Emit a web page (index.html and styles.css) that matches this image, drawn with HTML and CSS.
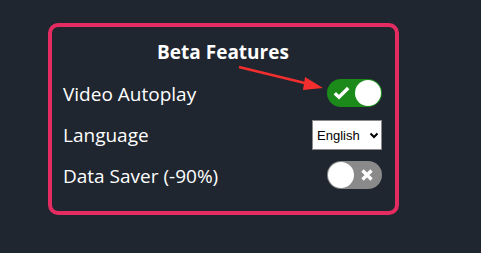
FILE: index.html
```html
<!DOCTYPE html>
<html>
<head>
<meta charset="utf-8">
<link rel="stylesheet" href="styles.css">
</head>
<body>
<div class="card">
  <div class="title">Beta Features</div>
  <div class="row first">
    <span class="label">Video Autoplay</span>
    <span class="toggle on">
      <svg class="icon check" width="17" height="14" viewBox="0 0 17 14"><path d="M1.8 7.2 L6 11.2 L15.2 2" fill="none" stroke="#fff" stroke-width="3.4"/></svg>
      <span class="knob"></span>
    </span>
  </div>
  <div class="row">
    <span class="label">Language</span>
    <span class="select-wrap">
      <select class="select"><option>English</option></select>
      <svg class="chev" width="10" height="7" viewBox="0 0 10 7"><path d="M1.5 1.5 L5 5 L8.5 1.5" fill="none" stroke="#000" stroke-width="2"/></svg>
    </span>
  </div>
  <div class="row">
    <span class="label">Data Saver (-90%)</span>
    <span class="toggle off">
      <span class="knob"></span>
      <svg class="icon cross" width="14" height="14" viewBox="0 0 14 14"><path d="M2.5 2.5 L11.5 11.5 M11.5 2.5 L2.5 11.5" fill="none" stroke="#fff" stroke-width="3.4"/></svg>
    </span>
  </div>
</div>
<svg class="arrow" width="100" height="30" viewBox="0 0 100 30">
  <line x1="2" y1="2" x2="76" y2="20" stroke="#f22e2e" stroke-width="2.5"/>
  <polygon points="86,23 68,12 66,25" fill="#f22e2e"/>
</svg>
</body>
</html>
```
FILE: styles.css
```css
html, body {
  margin: 0;
  padding: 0;
  background: #1f262f;
  width: 481px;
  height: 253px;
  overflow: hidden;
}
body {
  position: relative;
  font-family: "Open Sans", "Noto Sans", sans-serif;
  color: #fff;
}
.card {
  box-sizing: border-box;
  margin: 23px 0 0 48px;
  width: 351px;
  height: 192px;
  border: 4px solid #e42c62;
  border-radius: 10px;
  padding: 13px 13px 0 11px;
  display: flex;
  flex-direction: column;
}
.title {
  font-weight: 700;
  font-size: 19px;
  line-height: 24px;
  text-align: center;
  padding-left: 1px;
}
.row {
  display: flex;
  align-items: center;
  justify-content: space-between;
  height: 41px;
  font-size: 19px;
}
.row.first {
  margin-top: 9px;
}
.label {
  line-height: 24px;
}
.toggle {
  position: relative;
  width: 55px;
  height: 28px;
  border-radius: 14px;
  display: flex;
  align-items: center;
  box-sizing: border-box;
}
.toggle.on {
  background: #1b8a1b;
  justify-content: space-between;
  padding: 0 1px 0 6px;
  top: -1px;
}
.toggle.off {
  background: #8a8a8a;
  justify-content: space-between;
  padding: 0 8px 0 1px;
  top: -1px;
}
.knob {
  width: 26px;
  height: 26px;
  border-radius: 50%;
  background: #fff;
}
.select-wrap {
  position: relative;
  display: block;
  width: 70px;
  height: 30px;
}
.select {
  appearance: none;
  -webkit-appearance: none;
  box-sizing: border-box;
  width: 70px;
  height: 30px;
  margin: 0;
  border: 1px solid #8a8a8a;
  border-radius: 0;
  background: #fff;
  color: #000;
  font-family: "Liberation Sans", Arial, sans-serif;
  font-size: 13px;
  padding: 0 0 0 4px;
}
.chev {
  position: absolute;
  right: 3px;
  top: 12px;
  pointer-events: none;
}
.arrow {
  position: absolute;
  left: 237px;
  top: 65px;
}
```
